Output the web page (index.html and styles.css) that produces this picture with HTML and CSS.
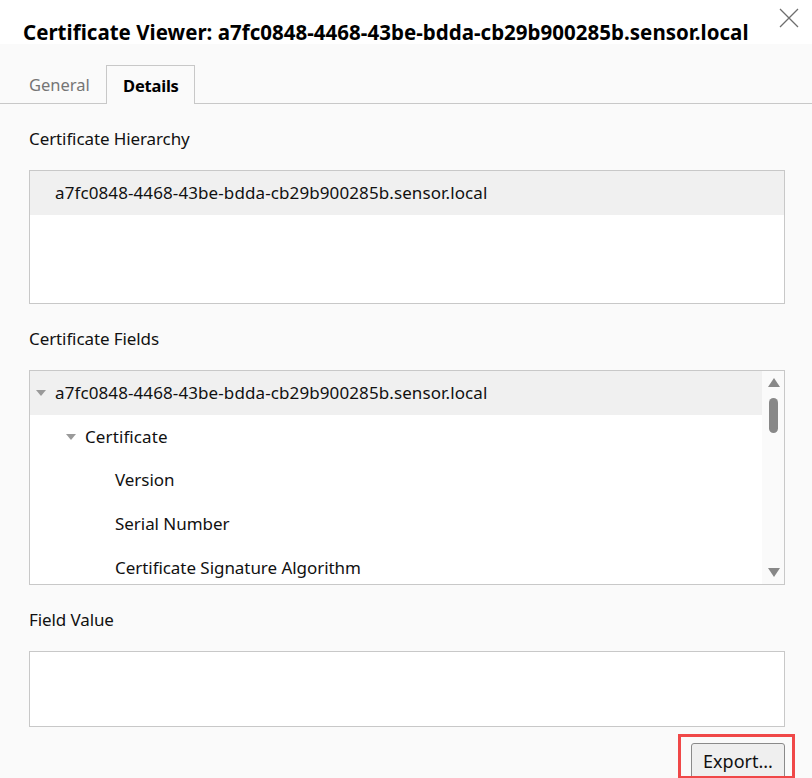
FILE: index.html
```html
<!DOCTYPE html>
<html>
<head>
<meta charset="utf-8">
<link rel="stylesheet" href="styles.css">
</head>
<body>
<div class="dialog">
  <header class="header">
    <h1 class="title">Certificate Viewer: a7fc0848-4468-43be-bdda-cb29b900285b.sensor.local</h1>
    <svg class="close" width="20" height="20" viewBox="0 0 20 20"><path d="M1 1 L19 19 M19 1 L1 19" stroke="#6e6e6e" stroke-width="1.3" fill="none"/></svg>
  </header>
  <nav class="tabs">
    <div class="tab">General</div>
    <div class="tab active">Details</div>
  </nav>
  <main class="content">
    <div class="label label-first">Certificate Hierarchy</div>
    <div class="box hierarchy">
      <div class="row selected indent0">a7fc0848-4468-43be-bdda-cb29b900285b.sensor.local</div>
    </div>
    <div class="label">Certificate Fields</div>
    <div class="box fields">
      <div class="list">
        <div class="row selected tree0"><span class="caret"></span>a7fc0848-4468-43be-bdda-cb29b900285b.sensor.local</div>
        <div class="row tree1"><span class="caret"></span>Certificate</div>
        <div class="row tree2">Version</div>
        <div class="row tree2">Serial Number</div>
        <div class="row tree2">Certificate Signature Algorithm</div>
      </div>
      <div class="scrollbar">
        <span class="arrow up"></span>
        <span class="thumb"></span>
        <span class="spacer"></span>
        <span class="arrow down"></span>
      </div>
    </div>
    <div class="label">Field Value</div>
    <div class="box value"></div>
    <div class="actions">
      <div class="highlight"><button class="btn">Export...</button></div>
    </div>
  </main>
</div>
</body>
</html>
```
FILE: styles.css
```css
* { box-sizing: border-box; }
html, body { margin: 0; padding: 0; }
body {
  background: #fafafa;
  font-family: "Noto Sans", "Open Sans", sans-serif;
  color: #111;
  overflow: hidden;
  height: 778px;
}
.dialog { width: 812px; }
.header {
  height: 44px;
  background: #fff;
  display: flex;
  justify-content: space-between;
  align-items: flex-start;
  padding-left: 23px;
  padding-right: 13px;
}
.title {
  margin: 0;
  margin-top: 19px;
  font-size: 20.5px;
  font-weight: 700;
  line-height: 26px;
  letter-spacing: 0.02px;
  color: #000;
  white-space: nowrap;
}
.close { margin-top: 8px; }
.tabs {
  display: flex;
  padding-top: 21px;
  border-bottom: 1px solid #c8c8c8;
  height: 60px;
}
.tab {
  height: 38px;
  padding: 0 10px 0 29px;
  width: 106px;
  font-size: 16.5px;
  line-height: 40px;
  color: #757575;
}
.tab.active {
  width: 89px;
  padding: 0 0 0 16px;
  color: #000;
  font-weight: 700;
  background: #fafafa;
  border: 1px solid #c8c8c8;
  border-bottom: none;
  height: 39px;
  line-height: 40px;
  letter-spacing: -0.2px;
}
.content {
  padding: 0 27px 0 29px;
}
.label {
  font-size: 17px;
  line-height: 22px;
  color: #111;
  letter-spacing: -0.1px;
  margin-top: 24px;
  margin-bottom: 20px;
}
.label.label-first { margin-top: 24px; }
.box {
  background: #fff;
  border: 1px solid #c8c8c8;
}
.hierarchy { height: 134px; }
.row {
  height: 43.6px;
  font-size: 17px;
  line-height: 43px;
  letter-spacing: 0.1px;
  white-space: nowrap;
  display: flex;
  align-items: center;
}
.row.selected { background: #f0f0f0; }
.indent0 { padding-left: 25px; }
.fields {
  height: 215px;
  display: flex;
  overflow: hidden;
}
.list { flex: 1; }
.tree0 { padding-left: 6px; }
.tree1 { padding-left: 36px; }
.tree2 { padding-left: 85px; letter-spacing: -0.05px; }
.caret {
  width: 0; height: 0;
  border-left: 5px solid transparent;
  border-right: 5px solid transparent;
  border-top: 6px solid #9a9a9a;
  margin-right: 9px;
  margin-top: 1px;
}
.scrollbar {
  width: 22px;
  background: #fafafa;
  display: flex;
  flex-direction: column;
  align-items: center;
  padding: 7px 0 7px 1px;
}
.arrow {
  width: 0; height: 0;
  border-left: 6px solid transparent;
  border-right: 6px solid transparent;
}
.arrow.up { border-bottom: 9px solid #888; }
.arrow.down { border-top: 9px solid #888; }
.thumb {
  width: 9px;
  height: 35px;
  border-radius: 5px;
  background: #888;
  margin-top: 11px;
}
.spacer { flex: 1; }
.value { height: 76px; }
.actions {
  display: flex;
  justify-content: flex-end;
  margin-top: 7px;
  margin-right: -10px;
}
.highlight {
  border: 3px solid #f04848;
  padding: 6px 7px 0 10px;
  height: 45px;
  overflow: hidden;
}
.btn {
  font-family: inherit;
  font-size: 18px;
  color: #111;
  background: #efefef;
  border: 1px solid #8a8a8a;
  border-radius: 3px;
  width: 94px;
  height: 40px;
  padding: 0 0 4px;
  line-height: 34px;
}
```
